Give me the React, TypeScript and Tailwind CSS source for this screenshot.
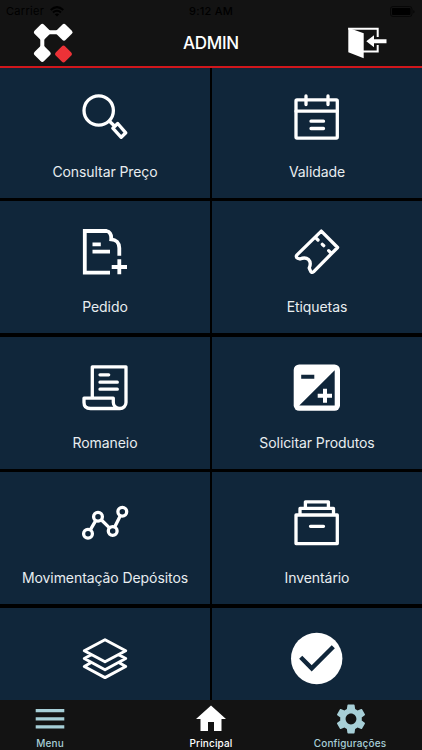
import type { ReactNode } from 'react';
import { MdHome, MdSettings } from 'react-icons/md';

interface Tile {
  label: string;
  icon: ReactNode;
}

const TILES: Tile[] = [
  {
    label: 'Consultar Preço',
    icon: (
      <>
        <circle cx="18.7" cy="18.5" r="14.7" />
        <path d="M29.5 29.3L34.5 34M32.8 36.2L37.7 31.5L45.8 40.8L41.2 45.3Z" />
      </>
    ),
  },
  {
    label: 'Validade',
    icon: (
      <>
        <rect x="4" y="7.9" width="41.3" height="38.2" rx="1" />
        <path d="M4 19.2H45.3M14 4V12.5M36 4V12.5M19 29.2H31.5M19 36.5H31.5" />
      </>
    ),
  },
  {
    label: 'Pedido',
    icon: (
      <g strokeWidth="3.8" strokeLinecap="butt" strokeLinejoin="miter">
        <path d="M30 45.7H4.8V4H26.5C30 4.8 31.5 8 31.2 12.3C36 12.5 39.3 16 39.3 21V28.7" />
        <path d="M12.5 17.3H20.8M12.5 24.7H30M31.7 40H47M39.3 32.3V47.3" />
      </g>
    ),
  },
  {
    label: 'Etiquetas',
    icon: (
      <path d="M29.3 4.1L45.6 20.5L21.5 44.8C20 46 18.6 45 18.3 43.5L17.2 41C19 37 18.5 34.5 16.5 32.5C14 30.4 11.5 30.5 8 32L5.5 31.2C4 30.3 4 28.8 5 27.8ZM24.3 11.3L26 13M30.3 17.3L31.7 18.7M36.7 23.7L38.3 25.3" />
    ),
  },
  {
    label: 'Romaneio',
    icon: (
      <path d="M12.3 35V3.8H46V39.5A6 6 0 0 1 40 45.5H10.5C6 45.5 4 43 4 39.5V35.2H33.3V39.5A6.5 6 0 0 0 39.8 45.5M20 11.8H28.7M20 19.2H37.3M20 26.2H37.3" />
    ),
  },
  {
    label: 'Solicitar Produtos',
    icon: (
      <g stroke="none">
        <rect x="1.7" y="1.5" width="46.3" height="46.3" rx="5.5" fill="#fff" />
        <path d="M7.3 42.5L42.7 7.2V42.5ZM9.2 11.8H22.3V15.8H9.2Z" fill="#10263a" />
        <path d="M25.7 32.8H40M33 25.8V39.8" stroke="#fff" strokeWidth="4" strokeLinecap="butt" />
      </g>
    ),
  },
  {
    label: 'Movimentação Depósitos',
    icon: (
      <>
        <circle cx="8" cy="35.7" r="4.4" />
        <circle cx="18" cy="18.7" r="4.4" />
        <circle cx="32.7" cy="33" r="4.4" />
        <circle cx="42.3" cy="13.7" r="4.4" />
        <path d="M10.3 31.8L15.7 22.6M21.2 21.8L29.5 29.9M34.7 29L40.3 17.7" strokeLinecap="butt" />
      </>
    ),
  },
  {
    label: 'Inventário',
    icon: (
      <path d="M4 17H45.3V45.6H4ZM8 17V10.4H41.5V17M13.4 10.4V3.8H36.4V10.4M18.5 28.3H31.5" />
    ),
  },
  {
    label: '',
    icon: (
      <path
        strokeWidth="3"
        d="M25 5.7L45.7 16.7L25 27.7L4.3 16.7ZM10.3 21.2L4.3 24.5L25 35.7L45.7 24.5L39.7 21.2M10.3 29L4.3 32.5L25 43.6L45.7 32.5L39.7 29"
      />
    ),
  },
  {
    label: '',
    icon: (
      <>
        <circle cx="24.7" cy="24.5" r="25.7" fill="#fff" stroke="none" />
        <path
          d="M8.7 23.2L19.7 34.3L41.3 12.7"
          stroke="#10263a"
          strokeWidth="4.4"
          strokeLinecap="butt"
          strokeLinejoin="miter"
        />
      </>
    ),
  },
];

function StatusBar() {
  return (
    <div className="grid h-[22px] grid-cols-3 items-center px-1.5 text-[11px] text-black">
      <div className="flex items-center gap-1.5">
        <span className="tracking-[0.3px]">Carrier</span>
        <svg className="h-[11px] w-[14px]" viewBox="0 0 14 11" fill="none" stroke="#000" strokeWidth="2">
          <path d="M.7 4Q7-1.7 13.3 4M3 6.5Q7 3 11 6.5" />
          <path d="M7 10.5L4.8 8.3Q7 6.5 9.2 8.3Z" fill="#000" stroke="none" />
        </svg>
      </div>
      <span className="text-center font-medium tracking-[0.2px]">9:12 AM</span>
      <svg className="mr-[1px] h-[11px] w-[25px] justify-self-end" viewBox="0 0 25 11">
        <rect x=".5" y=".5" width="21.5" height="10" rx="2.5" fill="none" stroke="#070707" />
        <rect x="2" y="2" width="18.5" height="7" rx="1" />
        <path d="M23.3 4V7.5L24.5 6.5V5Z" fill="#070707" />
      </svg>
    </div>
  );
}

function Header() {
  return (
    <header className="h-[68px] shrink-0 border-b-2 border-[#d0171c] bg-[#131313]">
      <StatusBar />
      <div className="grid h-[42px] grid-cols-[1fr_auto_1fr] items-center px-[33px]">
        <svg className="h-10 w-10" viewBox="33 23 40 40" fill="#fff">
          <path d="M42.3 53.5V32.3H64" fill="none" stroke="#fff" strokeWidth="4" />
          <rect x="35.7" y="25.7" width="13.2" height="13.2" rx="2.5" transform="rotate(45 42.3 32.3)" />
          <rect x="57.4" y="25.7" width="13.2" height="13.2" rx="2.5" transform="rotate(45 64 32.3)" />
          <rect x="35.7" y="46.9" width="13.2" height="13.2" rx="2.5" transform="rotate(45 42.3 53.5)" />
          <rect x="56.9" y="47.4" width="13.2" height="13.2" rx="2.5" fill="#ec3237" transform="rotate(45 63.5 54)" />
        </svg>
        <h1 className="pt-0.5 text-[17px] font-medium tracking-[-0.3px] text-white">ADMIN</h1>
        <svg className="mr-0.5 h-[34px] w-10 justify-self-end" viewBox="0 0 40 34" fill="#fff">
          <path d="M1.3 2.7H30.7V11M30.7 19V25.5H16" fill="none" stroke="#fff" strokeWidth="2" />
          <path d="M1.3 1.7L16.7 7.3V32.3L1.3 26.3Z" />
          <path d="M19.3 15.3L27 9.3V13.3H39.5V17.3H27V21.3Z" />
        </svg>
      </div>
    </header>
  );
}

function MenuTile({ label, icon }: Tile) {
  return (
    <button className="flex h-[132px] flex-col items-center bg-[#10263a] pt-[26px]">
      <svg
        className="h-[50px] w-[50px] overflow-visible"
        viewBox="0 0 50 50"
        fill="none"
        stroke="#fff"
        strokeWidth="3.3"
        strokeLinecap="round"
        strokeLinejoin="round"
      >
        {icon}
      </svg>
      <span className="mt-5 text-sm leading-5 tracking-[-0.08px] whitespace-nowrap text-[#e8edf0]">
        {label}
      </span>
    </button>
  );
}

function TabBar() {
  return (
    <nav className="flex h-[50px] shrink-0 justify-between bg-[#131313] text-[10px] font-medium tracking-[0.15px] text-[#a7cfd7]">
      <button className="flex w-[144px] flex-col items-center pt-[1px] pr-[44px]">
        <svg className="h-9 w-9" viewBox="0 0 36 36" fill="currentColor">
          <path d="M3.7 8H32.3V11.3H3.7ZM3.7 16.2H32.3V19.5H3.7ZM3.7 24.3H32.3V27.6H3.7Z" />
        </svg>
        <span className="leading-3">Menu</span>
      </button>
      <button className="flex w-[100px] flex-col items-center pt-[1px] text-white">
        <MdHome className="h-9 w-9" />
        <span className="leading-3">Principal</span>
      </button>
      <button className="flex w-[144px] flex-col items-center pt-[1px]">
        <MdSettings className="ml-[2px] h-9 w-9" />
        <span className="leading-3">Configurações</span>
      </button>
    </nav>
  );
}

export default function App() {
  return (
    <div className="flex h-[750px] w-[422px] flex-col overflow-hidden bg-black font-[Inter,'Liberation_Sans',sans-serif]">
      <Header />
      <main className="min-h-0 flex-1 overflow-hidden">
        <div className="-mt-[2.5px] grid grid-cols-2 gap-x-[2px] gap-y-[3.5px]">
          {TILES.map((tile, i) => (
            <MenuTile key={i} {...tile} />
          ))}
        </div>
      </main>
      <TabBar />
    </div>
  );
}
